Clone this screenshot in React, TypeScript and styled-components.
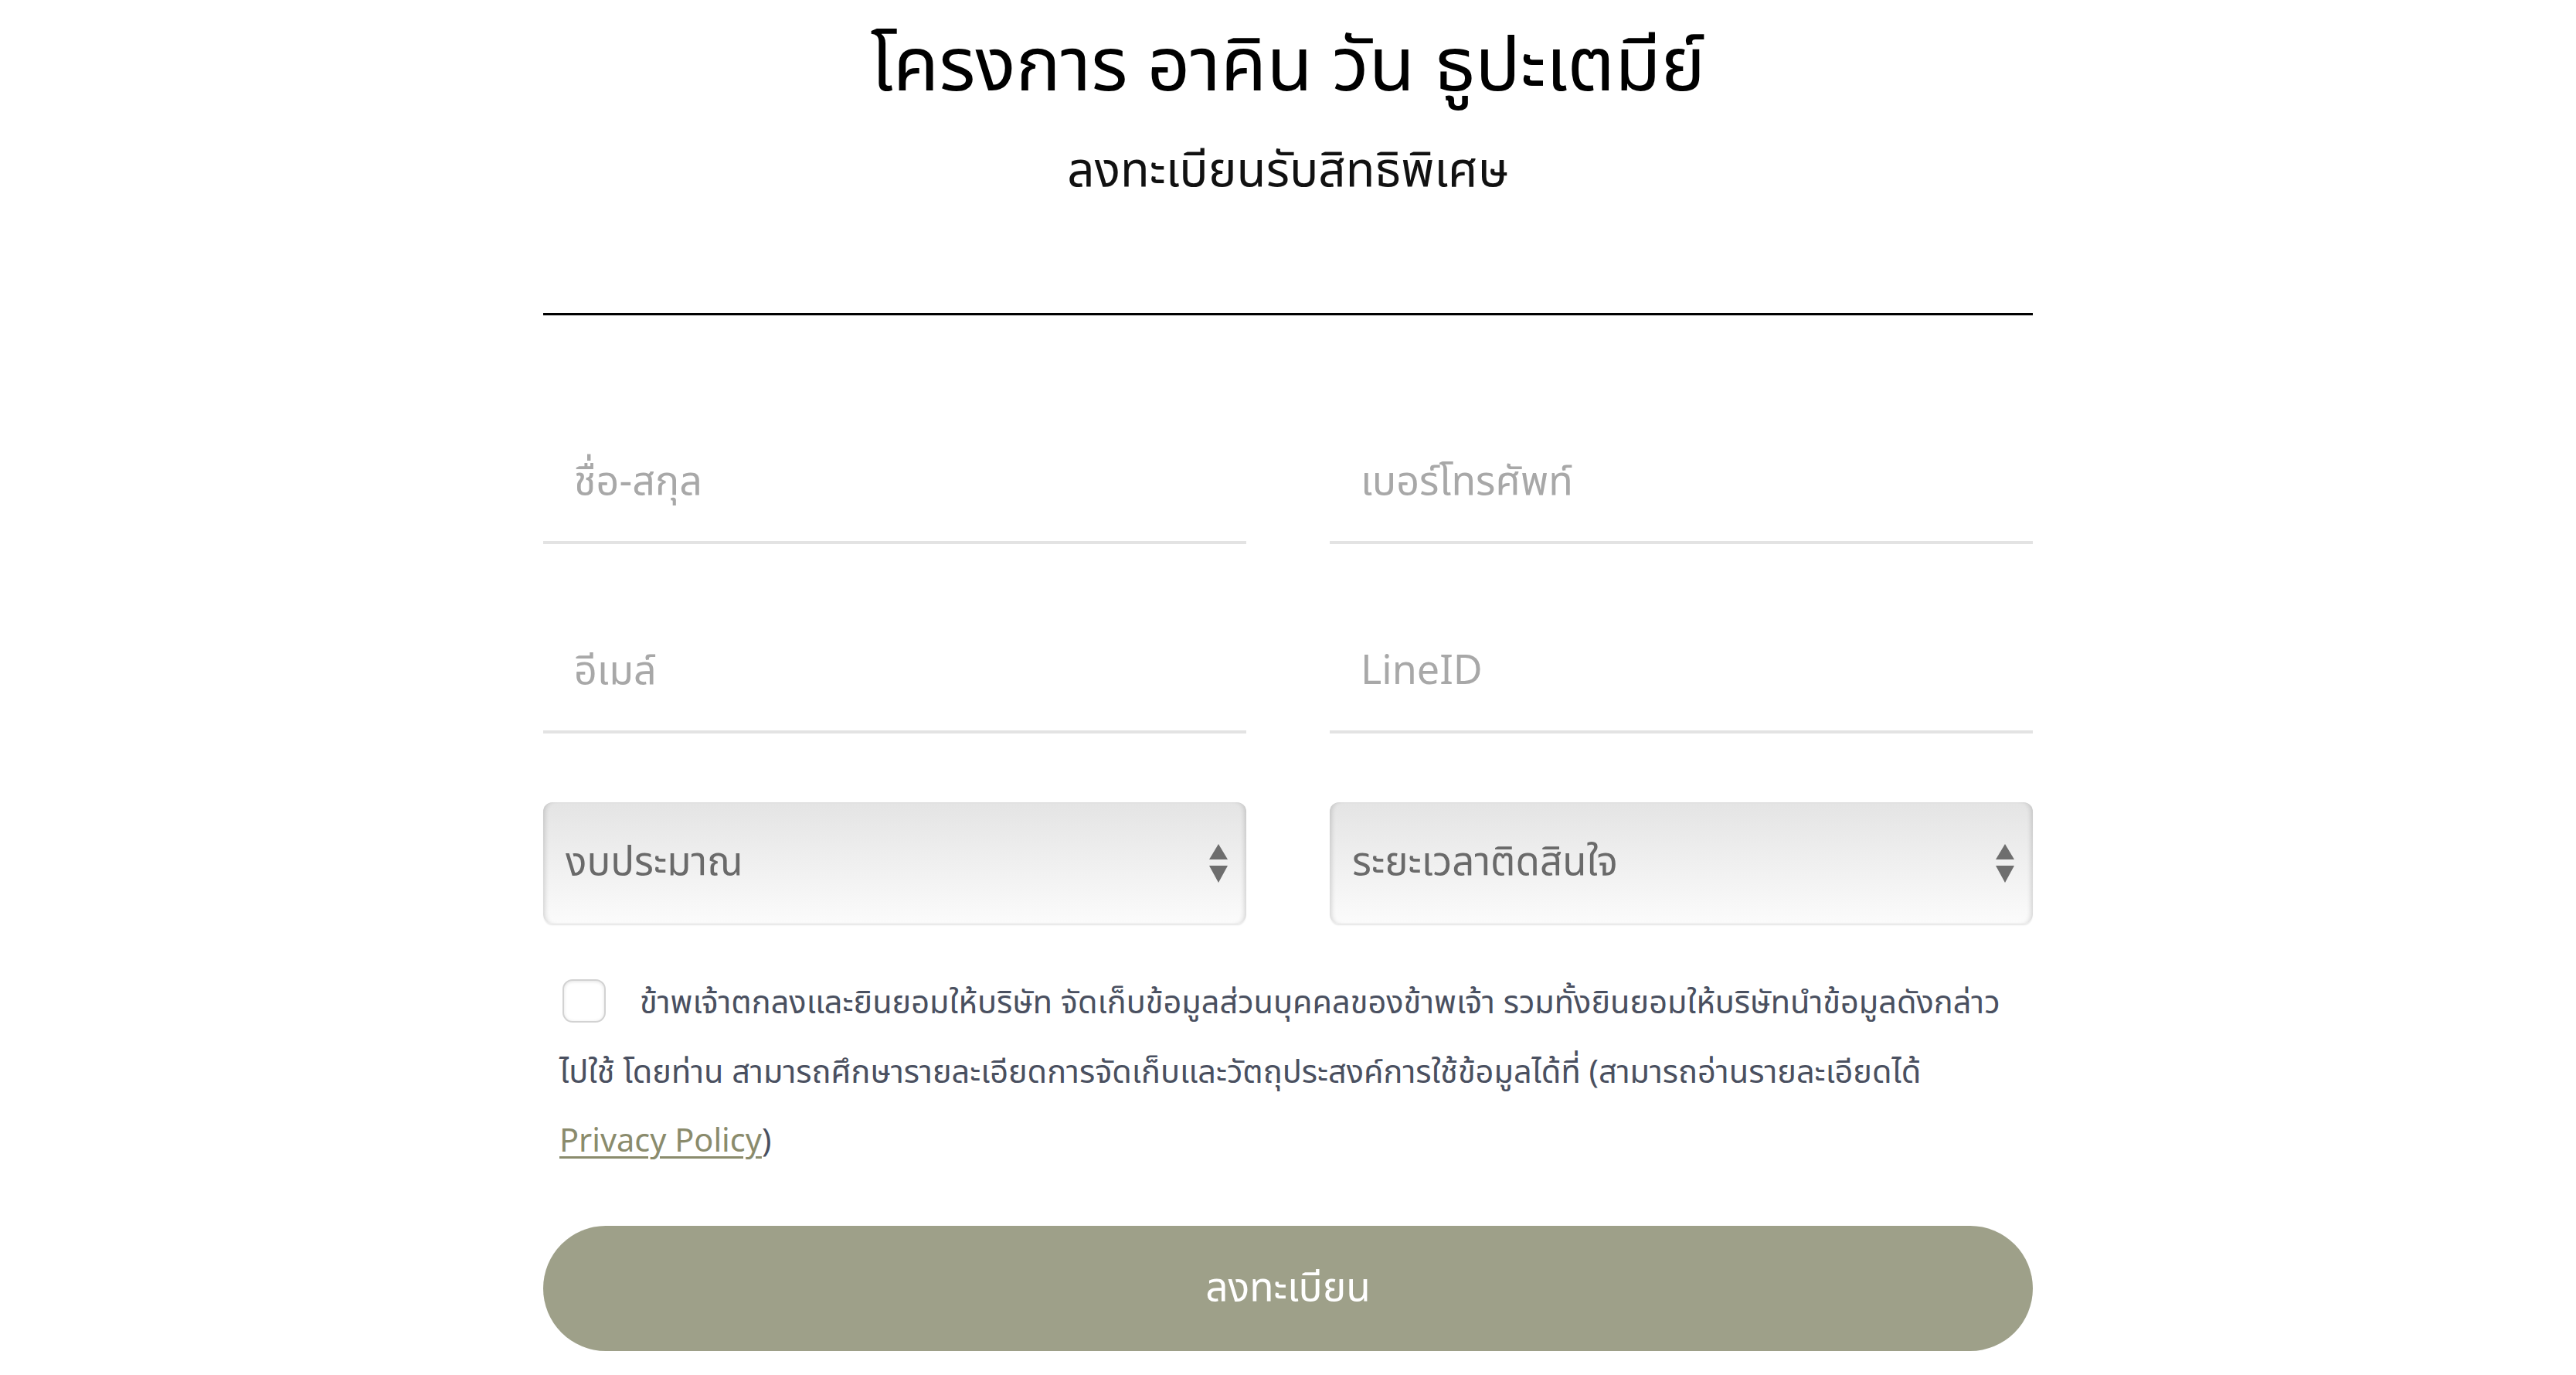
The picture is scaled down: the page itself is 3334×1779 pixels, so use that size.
import React from 'react';
import styled, { createGlobalStyle } from 'styled-components';

const GlobalStyle = createGlobalStyle`
  body {
    margin: 0;
    background: #fff;
    font-family: "Noto Sans Thai", "Noto Sans", "Liberation Sans", sans-serif;
  }
`;

const Page = styled.div`
  width: 1928px;
  margin: 0 auto;
`;

const Header = styled.header`
  text-align: center;
`;

const Title = styled.h1`
  margin: 0;
  padding-top: 4px;
  font-size: 97px;
  line-height: 168px;
  font-weight: 400;
  color: #000;
`;

const Subtitle = styled.h2`
  margin: 0;
  font-size: 62px;
  line-height: 100px;
  font-weight: 400;
  color: #111;
`;

const Divider = styled.hr`
  margin: 133px 0 0;
  border: 0;
  border-top: 3px solid #000;
`;

const FormGrid = styled.form`
  display: grid;
  grid-template-columns: 1fr 1fr;
  column-gap: 108px;
  row-gap: 89px;
  margin-top: 140px;
`;

const TextField = styled.input`
  box-sizing: content-box;
  height: 152px;
  padding: 0 0 0 40px;
  border: 0;
  border-bottom: 4px solid #e3e3e3;
  font: inherit;
  font-size: 52px;
  color: #333;
  outline: none;
  background: transparent;
  &::placeholder {
    color: #a8a8a8;
  }
`;

const SelectWrap = styled.div`
  position: relative;
  height: 157px;
`;

const Select = styled.select`
  appearance: none;
  width: 100%;
  height: 100%;
  padding: 0 80px 0 29px;
  border: 0;
  border-radius: 12px;
  font: inherit;
  font-size: 51px;
  color: #6a6a6a;
  background: linear-gradient(#e4e4e4, #fbfbfb);
  box-shadow: inset 6px 0 6px -4px rgba(0, 0, 0, 0.16),
    inset -6px 0 6px -4px rgba(0, 0, 0, 0.16),
    0 3px 2px -1px rgba(0, 0, 0, 0.1);
  outline: none;
`;

const Arrows = styled.svg`
  position: absolute;
  right: 24px;
  top: 50%;
  transform: translateY(-50%);
  pointer-events: none;
`;

const Consent = styled.p`
  margin: 59px 0 0;
  padding: 0 21px;
  font-size: 41.5px;
  line-height: 89.5px;
  color: #4a5060;
`;

const Check = styled.input`
  appearance: none;
  width: 56px;
  height: 56px;
  margin: 0 44px 0 4px;
  vertical-align: -12px;
  border: 2px solid #d2d2d2;
  border-radius: 13px;
  background: #fff;
  box-shadow: inset 0 1px 4px rgba(0, 0, 0, 0.12);
`;

const PolicyLink = styled.a`
  color: #8a8b6c;
  white-space: nowrap;
  text-decoration: underline;
  text-decoration-thickness: 3px;
  text-underline-offset: 6px;
`;

const Submit = styled.button`
  display: block;
  width: 100%;
  height: 162px;
  margin-top: 63px;
  border: 0;
  border-radius: 81px;
  background: #9ea089;
  color: #fff;
  font: inherit;
  font-size: 51.5px;
`;

const UpDown = () => (
  <Arrows width="24" height="50" viewBox="0 0 24 50">
    <polygon points="12,0 24,20 0,20" fill="#6e6e6e" />
    <polygon points="0,28 24,28 12,50" fill="#6e6e6e" />
  </Arrows>
);

function App() {
  return (
    <Page>
      <GlobalStyle />
      <Header>
        <Title>โครงการ อาคิน วัน ธูปะเตมีย์</Title>
        <Subtitle>ลงทะเบียนรับสิทธิพิเศษ</Subtitle>
      </Header>
      <Divider />
      <FormGrid>
        <TextField placeholder="ชื่อ-สกุล" />
        <TextField placeholder="เบอร์โทรศัพท์" />
        <TextField placeholder="อีเมล์" />
        <TextField placeholder="LineID" />
        <SelectWrap>
          <Select defaultValue="">
            <option value="">งบประมาณ</option>
          </Select>
          <UpDown />
        </SelectWrap>
        <SelectWrap>
          <Select defaultValue="">
            <option value="">ระยะเวลาติดสินใจ</option>
          </Select>
          <UpDown />
        </SelectWrap>
      </FormGrid>
      <Consent>
        <Check type="checkbox" />
        ข้าพเจ้าตกลงและยินยอมให้บริษัท จัดเก็บข้อมูลส่วนบุคคลของข้าพเจ้า รวมทั้งยินยอมให้บริษัทนำข้อมูลดังกล่าวไปใช้ โดยท่าน สามารถศึกษารายละเอียดการจัดเก็บและวัตถุประสงค์การใช้ข้อมูลได้ที่ (สามารถอ่านรายละเอียดได้ <PolicyLink href="#">Privacy Policy</PolicyLink>)
      </Consent>
      <Submit type="button">ลงทะเบียน</Submit>
    </Page>
  );
}

export default App;
